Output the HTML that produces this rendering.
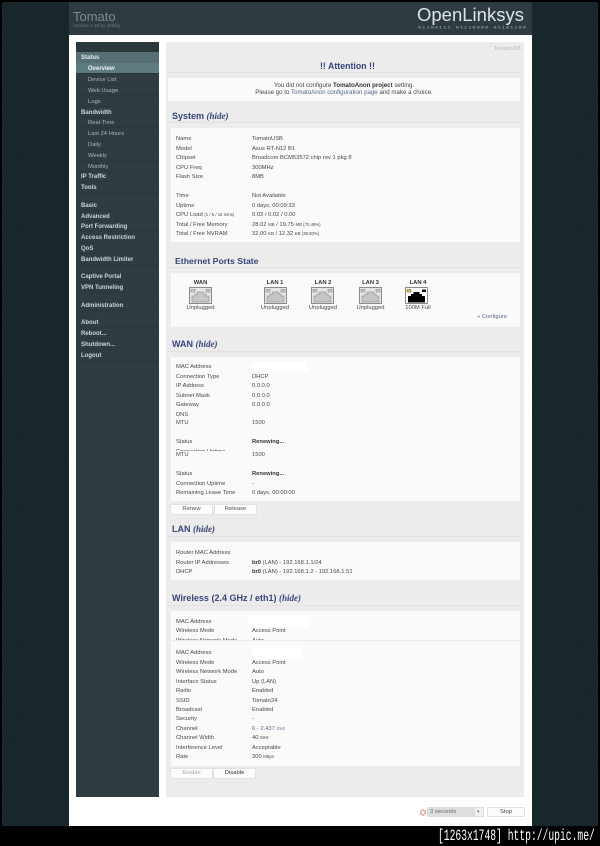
<!DOCTYPE html>
<html><head><meta charset="utf-8">
<style>
html,body{margin:0;padding:0;background:#000}
#p{position:relative;width:600px;height:846px;overflow:hidden;background:#000;font-family:"Liberation Sans",sans-serif;font-size:5.8px;color:#484848}
#p div,#p svg{position:absolute}
.t{white-space:nowrap;line-height:8px;height:8px;margin-top:1px}
.bg{background-color:#17272b;background-image:repeating-linear-gradient(45deg,rgba(255,255,255,.006) 0 1px,transparent 1px 3px),repeating-linear-gradient(-45deg,rgba(0,0,0,.05) 0 1px,transparent 1px 3px)}
.m{left:81px;color:#c9d6d8;font-weight:bold;font-size:6px}
.s{left:88px;color:#a9b8bb;font-size:5.8px;font-weight:normal}
.l{height:1px;left:76px;width:83px;background:#2a373c}
.pn{background:#fafafa;left:171px;width:349px}
.h{color:#36457c;font-weight:bold;font-size:9px;line-height:12px;height:12px;white-space:nowrap}
.h i{font-family:"Liberation Serif",serif;font-size:9px}
.hl{left:168px;width:352px;height:1px;background:#e2e2e2}
.a{left:176px}.v{left:252px}
b{color:#333}
.b{background:#fcfcfc;border:1px solid #e2e2e2;box-sizing:border-box;text-align:center;color:#555;font-size:5.9px;line-height:10px;height:12px}
.c{text-align:center;width:50px}
.w{background:#fff}
small{font-size:4.3px}
</style></head><body><div id="p">
<div class="bg" style="left:2px;top:2px;width:596px;height:824px"></div>
<div style="left:69px;top:2px;width:463px;height:33px;background:#2e3c41"></div>
<div style="left:69px;top:35px;width:463px;height:791px;background:#fff"></div>
<div class="t" style="left:73px;top:9px;font-size:13px;line-height:14px;height:14px;color:#7d8b8e">Tomato</div>
<div class="t" style="left:73px;top:21px;font-size:4.7px;color:#6b797c">Version 1.28 by shibby</div>
<div class="t" style="left:417px;top:3px;font-size:18.5px;line-height:22px;height:22px;color:#dfe4e5">OpenLinksys</div>
<div class="t" style="left:418px;top:23px;font-size:5.4px;color:#aab3b5;letter-spacing:.95px;font-family:'Liberation Mono',monospace;transform-origin:0 50%;transform:scaleY(.7)">01100111 01110000 01101100</div>

<div style="left:76px;top:42px;width:83px;height:755px;background:#2f3d42"></div>
<div style="left:76px;top:42px;width:83px;height:10px;background:#2a383c"></div>
<div style="left:76px;top:52px;width:83px;height:11px;background:#566f75"></div>
<div style="left:76px;top:63px;width:83px;height:10px;background:#5d7a80"></div>
<div class="l" style="top:73px"></div><div class="l" style="top:84px"></div><div class="l" style="top:95px"></div><div class="l" style="top:106px"></div><div class="l" style="top:117px"></div><div class="l" style="top:127px"></div><div class="l" style="top:138px"></div><div class="l" style="top:149px"></div><div class="l" style="top:160px"></div><div class="l" style="top:171px"></div><div class="l" style="top:181px"></div><div class="l" style="top:192px"></div><div class="l" style="top:210px"></div><div class="l" style="top:221px"></div><div class="l" style="top:231px"></div><div class="l" style="top:242px"></div><div class="l" style="top:253px"></div><div class="l" style="top:264px"></div><div class="l" style="top:281px"></div><div class="l" style="top:292px"></div><div class="l" style="top:310px"></div><div class="l" style="top:327px"></div><div class="l" style="top:338px"></div><div class="l" style="top:349px"></div><div class="l" style="top:360px"></div>
<div class="t m" style="top:53px;color:#e4ecee">Status</div>
<div class="t m" style="left:88px;top:64px;color:#eef4f5">Overview</div>
<div class="t s" style="top:75px">Device List</div>
<div class="t s" style="top:86px">Web Usage</div>
<div class="t s" style="top:97px">Logs</div>
<div class="t m" style="top:108px">Bandwidth</div>
<div class="t s" style="top:118px">Real-Time</div>
<div class="t s" style="top:129px">Last 24 Hours</div>
<div class="t s" style="top:140px">Daily</div>
<div class="t s" style="top:151px">Weekly</div>
<div class="t s" style="top:162px">Monthly</div>
<div class="t m" style="top:172px">IP Traffic</div>
<div class="t m" style="top:183px">Tools</div>
<div class="t m" style="top:201px">Basic</div>
<div class="t m" style="top:212px">Advanced</div>
<div class="t m" style="top:222px">Port Forwarding</div>
<div class="t m" style="top:233px">Access Restriction</div>
<div class="t m" style="top:244px">QoS</div>
<div class="t m" style="top:255px">Bandwidth Limiter</div>
<div class="t m" style="top:272px">Captive Portal</div>
<div class="t m" style="top:283px">VPN Tunneling</div>
<div class="t m" style="top:301px">Administration</div>
<div class="t m" style="top:318px">About</div>
<div class="t m" style="top:329px">Reboot...</div>
<div class="t m" style="top:340px">Shutdown...</div>
<div class="t m" style="top:351px">Logout</div>

<div style="left:166px;top:42px;width:358px;height:755px;background:#ececec"></div>
<div class="t" style="left:494px;top:44px;font-size:5px;color:#bbb">TomatoUSB</div>
<div class="h" style="left:320px;top:60px;font-size:8.800px">!! Attention !!</div>
<div class="hl" style="top:72px"></div>
<div class="pn" style="left:168px;width:352px;top:78px;height:23px"></div>
<div class="t" style="left:168px;width:352px;text-align:center;top:81px;font-size:6.15px">You did not configure <b>TomatoAnon project</b> setting.</div>
<div class="t" style="left:168px;width:352px;text-align:center;top:88px;font-size:6.15px">Please go to <span style="color:#566a8c">TomatoAnon configuration page</span> and make a choice.</div>

<div class="h" style="left:172px;top:110px">System <i>(hide)</i></div>
<div class="hl" style="top:122px"></div>
<div class="pn" style="top:128px;height:114px"></div>
<div class="t a" style="top:134px">Name</div><div class="t v" style="top:134px">TomatoUSB</div>
<div class="t a" style="top:144px">Model</div><div class="t v" style="top:144px">Asus RT-N12 B1</div>
<div class="t a" style="top:153px">Chipset</div><div class="t v" style="top:153px">Broadcom BCM53572 chip rev 1 pkg 8</div>
<div class="t a" style="top:163px">CPU Freq</div><div class="t v" style="top:163px">300MHz</div>
<div class="t a" style="top:172px">Flash Size</div><div class="t v" style="top:172px">8MB</div>
<div class="t a" style="top:191px">Time</div><div class="t v" style="top:191px">Not Available</div>
<div class="t a" style="top:201px">Uptime</div><div class="t v" style="top:201px">0 days, 00:09:33</div>
<div class="t a" style="top:210px">CPU Load <small>(1 / 5 / 15 mins)</small></div><div class="t v" style="top:210px">0.03 / 0.02 / 0.00</div>
<div class="t a" style="top:220px">Total / Free Memory</div><div class="t v" style="top:220px">28.02 <small>MB</small> / 19.75 <small>MB (70.49%)</small></div>
<div class="t a" style="top:229px">Total / Free NVRAM</div><div class="t v" style="top:229px">32.00 <small>KB</small> / 12.32 <small>KB (38.50%)</small></div>

<div class="h" style="left:175px;top:255px;font-size:8.7px">Ethernet Ports State</div>
<div class="hl" style="top:267px"></div>
<div class="pn" style="top:273px;height:54px"></div>
<div class="t c" style="left:175.500px;top:278px;font-weight:bold;color:#333">WAN</div>
<div class="t c" style="left:250px;top:278px;font-weight:bold;color:#333">LAN 1</div>
<div class="t c" style="left:298px;top:278px;font-weight:bold;color:#333">LAN 2</div>
<div class="t c" style="left:345.500px;top:278px;font-weight:bold;color:#333">LAN 3</div>
<div class="t c" style="left:393px;top:278px;font-weight:bold;color:#333">LAN 4</div>
<svg style="left:189px;top:287px" width="23" height="17" viewBox="0 0 23 17"><rect x=".5" y=".5" width="22" height="16" fill="#e6e6e6" stroke="#8a8a8a"/><path d="M3 15V9H6V7H8.500V5H14.500V7H17V9H20V15Z" fill="#c6c6c6" stroke="#999" stroke-width=".7"/><rect x="2" y="2.500" width="4" height="2.500" fill="#ccc" stroke="#8a8a8a" stroke-width=".6"/><rect x="17" y="2.500" width="4" height="2.500" fill="#ccc" stroke="#8a8a8a" stroke-width=".6"/></svg>
<svg style="left:264px;top:287px" width="23" height="17" viewBox="0 0 23 17"><rect x=".5" y=".5" width="22" height="16" fill="#e6e6e6" stroke="#8a8a8a"/><path d="M3 15V9H6V7H8.500V5H14.500V7H17V9H20V15Z" fill="#c6c6c6" stroke="#999" stroke-width=".7"/><rect x="2" y="2.500" width="4" height="2.500" fill="#ccc" stroke="#8a8a8a" stroke-width=".6"/><rect x="17" y="2.500" width="4" height="2.500" fill="#ccc" stroke="#8a8a8a" stroke-width=".6"/></svg>
<svg style="left:311px;top:287px" width="23" height="17" viewBox="0 0 23 17"><rect x=".5" y=".5" width="22" height="16" fill="#e6e6e6" stroke="#8a8a8a"/><path d="M3 15V9H6V7H8.500V5H14.500V7H17V9H20V15Z" fill="#c6c6c6" stroke="#999" stroke-width=".7"/><rect x="2" y="2.500" width="4" height="2.500" fill="#ccc" stroke="#8a8a8a" stroke-width=".6"/><rect x="17" y="2.500" width="4" height="2.500" fill="#ccc" stroke="#8a8a8a" stroke-width=".6"/></svg>
<svg style="left:359px;top:287px" width="23" height="17" viewBox="0 0 23 17"><rect x=".5" y=".5" width="22" height="16" fill="#e6e6e6" stroke="#8a8a8a"/><path d="M3 15V9H6V7H8.500V5H14.500V7H17V9H20V15Z" fill="#c6c6c6" stroke="#999" stroke-width=".7"/><rect x="2" y="2.500" width="4" height="2.500" fill="#ccc" stroke="#8a8a8a" stroke-width=".6"/><rect x="17" y="2.500" width="4" height="2.500" fill="#ccc" stroke="#8a8a8a" stroke-width=".6"/></svg>
<svg style="left:405px;top:287px" width="23" height="17" viewBox="0 0 23 17"><rect x=".5" y=".5" width="22" height="16" fill="#fff" stroke="#8a8a8a"/><path d="M3 15.500V9H6V7H8.500V5H14.500V7H17V9H20V15.500Z" fill="#000"/><rect x="2" y="2.500" width="4" height="2.500" fill="#e8c020" stroke="#555" stroke-width=".5"/><rect x="17" y="2.500" width="4" height="2.500" fill="#111"/></svg>
<div class="t c" style="left:175.500px;top:303px">Unplugged</div>
<div class="t c" style="left:250px;top:303px">Unplugged</div>
<div class="t c" style="left:298px;top:303px">Unplugged</div>
<div class="t c" style="left:345.500px;top:303px">Unplugged</div>
<div class="t c" style="left:393px;top:303px">100M Full</div>
<div class="t" style="left:477px;top:312px;color:#566a8c">» Configure</div>

<div class="h" style="left:172px;top:338px">WAN <i>(hide)</i></div>
<div class="hl" style="top:351px"></div>
<div class="pn" style="top:357px;height:144px"></div>
<div class="w" style="left:252px;top:362px;width:55px;height:10px"></div>
<div class="t a" style="top:362px">MAC Address</div>
<div class="t a" style="top:372px">Connection Type</div><div class="t v" style="top:372px">DHCP</div>
<div class="t a" style="top:381px">IP Address</div><div class="t v" style="top:381px">0.0.0.0</div>
<div class="t a" style="top:391px">Subnet Mask</div><div class="t v" style="top:391px">0.0.0.0</div>
<div class="t a" style="top:400px">Gateway</div><div class="t v" style="top:400px">0.0.0.0</div>
<div class="t a" style="top:409.500px">DNS</div>
<div class="t a" style="top:418px">MTU</div><div class="t v" style="top:418px">1500</div>
<div class="t a" style="top:437px">Status</div><div class="t v" style="top:437px"><b>Renewing...</b></div>
<div class="t a" style="top:447px">Connection Uptime</div>
<div class="pn" style="top:451px;height:12px"></div>
<div class="t a" style="top:449.500px">MTU</div><div class="t v" style="top:449.500px">1500</div>
<div class="t a" style="top:469px">Status</div><div class="t v" style="top:469px"><b>Renewing...</b></div>
<div class="t a" style="top:478.500px">Connection Uptime</div><div class="t v" style="top:478.500px">-</div>
<div class="t a" style="top:488px">Remaining Lease Time</div><div class="t v" style="top:488px">0 days, 00:00:00</div>
<div class="b" style="left:170px;top:504px;width:43px;height:11px;line-height:9px">Renew</div>
<div class="b" style="left:214px;top:504px;width:43px;height:11px;line-height:9px">Release</div>

<div class="h" style="left:172px;top:523px">LAN <i>(hide)</i></div>
<div class="hl" style="top:536px"></div>
<div class="pn" style="top:542px;height:38px"></div>
<div class="t a" style="top:547.500px">Router MAC Address</div>
<div class="t a" style="top:557.500px">Router IP Addresses</div><div class="t v" style="top:557.500px"><b>br0</b> (LAN) - 192.168.1.1/24</div>
<div class="t a" style="top:566.500px">DHCP</div><div class="t v" style="top:566.500px"><b>br0</b> (LAN) - 192.168.1.2 - 192.168.1.51</div>

<div class="h" style="left:172px;top:592px">Wireless (2.4 GHz / eth1) <i>(hide)</i></div>
<div class="hl" style="top:605px"></div>
<div class="pn" style="top:611px;height:30px;overflow:hidden"></div>
<div class="w" style="left:248px;top:614px;width:61px;height:13px"></div>
<div class="t a" style="top:616.500px">MAC Address</div>
<div class="t a" style="top:626px">Wireless Mode</div><div class="t v" style="top:626px">Access Point</div>
<div class="t a" style="top:635.500px">Wireless Network Mode</div><div class="t v" style="top:635.500px">Auto</div>
<div style="left:166px;top:640px;width:358px;height:1px;background:#ececec"></div>
<div class="pn" style="top:641px;height:125px"></div>
<div class="w" style="left:252px;top:646px;width:51px;height:13px"></div>
<div class="t a" style="top:648px">MAC Address</div>
<div class="t a" style="top:657.500px">Wireless Mode</div><div class="t v" style="top:657.500px">Access Point</div>
<div class="t a" style="top:667px">Wireless Network Mode</div><div class="t v" style="top:667px">Auto</div>
<div class="t a" style="top:676.500px">Interface Status</div><div class="t v" style="top:676.500px">Up (LAN)</div>
<div class="t a" style="top:686px">Radio</div><div class="t v" style="top:686px">Enabled</div>
<div class="t a" style="top:695.500px">SSID</div><div class="t v" style="top:695.500px">Tomato24</div>
<div class="t a" style="top:705px">Broadcast</div><div class="t v" style="top:705px">Enabled</div>
<div class="t a" style="top:714px">Security</div><div class="t v" style="top:714px">-</div>
<div class="t a" style="top:723.500px">Channel</div><div class="t v" style="top:723.500px;color:#566a8c">6 - 2.437 <small>GHz</small></div>
<div class="t a" style="top:733px">Channel Width</div><div class="t v" style="top:733px">40 <small>MHz</small></div>
<div class="t a" style="top:742.500px">Interference Level</div><div class="t v" style="top:742.500px">Acceptable</div>
<div class="t a" style="top:752px">Rate</div><div class="t v" style="top:752px">300 <small>Mbps</small></div>
<div class="b" style="left:170px;top:768px;width:43px;height:11px;line-height:9px;color:#aaa">Enable</div>
<div class="b" style="left:213px;top:768px;width:43px;height:11px;line-height:9px;color:#333">Disable</div>

<svg style="left:419px;top:808px" width="8" height="9" viewBox="0 0 8 9"><circle cx="4" cy="4.500" r="2.500" fill="none" stroke="#e08a80" stroke-width="1.400" stroke-dasharray="2 .6"/></svg>
<div style="left:427px;top:807px;width:57px;height:10px;background:#dedede"></div>
<div class="t" style="left:430px;top:807px;color:#666">3 seconds</div>
<div style="left:475px;top:808px;width:8px;height:8px;background:#f0f0f0"></div>
<div class="t" style="left:477px;top:807px;color:#777;font-size:5px">▾</div>
<div class="b" style="left:487px;top:807px;width:38px;height:10px;line-height:8px;color:#444">Stop</div>

<div class="t" style="left:438px;top:826px;height:18px;line-height:18px;font-family:'Liberation Mono',monospace;font-size:16px;color:#fff;transform-origin:0 50%;transform:scaleX(.605)">[1263x1748]&nbsp;http://upic.me/</div>
</div></body></html>
